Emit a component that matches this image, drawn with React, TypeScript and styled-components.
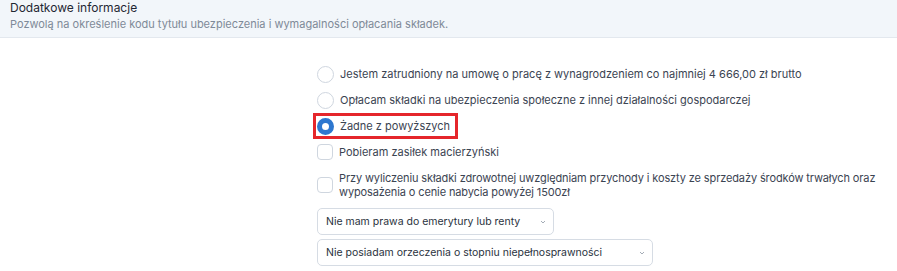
import React from "react";
import styled, { createGlobalStyle } from "styled-components";

const Global = createGlobalStyle`
  html, body { margin: 0; padding: 0; background: #ffffff; }
  body { font-family: Inter, "Noto Sans", sans-serif; color: #3b4452; }
`;

const Page = styled.div`
  width: 897px;
  height: 271px;
  overflow: hidden;
  background: #fff;
`;

const Header = styled.div`
  background: #f2f6fa;
  border-bottom: 1px solid #e3e8ee;
  height: 37px;
  padding: 0 10px;
  display: flex;
  flex-direction: column;
  justify-content: flex-start;
`;

const Title = styled.div`
  font-size: 12px;
  line-height: 15px;
  color: #1f2733;
`;

const Subtitle = styled.div`
  font-size: 11px;
  line-height: 16px;
  color: #7f8a98;
  margin-top: 1px;
`;

const Form = styled.div`
  padding: 23px 0 0 313px;
  display: flex;
  flex-direction: column;
  align-items: flex-start;
`;

const Option = styled.label<{ $highlight?: boolean; $multi?: boolean }>`
  display: flex;
  align-items: center;
  gap: 6px;
  min-height: 26px;
  padding: ${(p) => (p.$multi ? "6px 4px 6px 4px" : "0 8px 0 4px")};
  box-sizing: border-box;
  font-size: 11px;
  line-height: 14px;
  letter-spacing: ${(p) => (p.$multi ? "-0.12px" : "normal")};
  color: #3b4452;
  outline: ${(p) => (p.$highlight ? "3px solid #e5262b" : "none")};
  outline-offset: -3px;
`;

const Radio = styled.span<{ $checked?: boolean }>`
  flex: none;
  width: 17px;
  height: 17px;
  border-radius: 50%;
  box-sizing: border-box;
  border: ${(p) => (p.$checked ? "5px solid #2e77cf" : "1px solid #cfd6df")};
  background: #fff;
`;

const Checkbox = styled.span`
  flex: none;
  width: 16px;
  height: 16px;
  border-radius: 4px;
  box-sizing: border-box;
  border: 1px solid #cfd6df;
  background: #fff;
`;

const Text = styled.span`
  max-width: 560px;
`;

const SelectBox = styled.div<{ $width: number }>`
  width: ${(p) => p.$width}px;
  height: 27px;
  margin-left: 4px;
  box-sizing: border-box;
  border: 1px solid #d6dce4;
  border-radius: 5px;
  display: flex;
  align-items: center;
  justify-content: space-between;
  padding: 0 6px 0 8px;
  font-size: 10.5px;
  color: #2a323d;
`;

const Selects = styled.div`
  display: flex;
  flex-direction: column;
  gap: 4px;
  margin-top: 3px;
`;

const Chevron = () => (
  <svg width="8" height="8" viewBox="0 0 8 8">
    <path d="M2 3 L4 5 L6 3" fill="none" stroke="#9aa3ae" strokeWidth="0.9" />
  </svg>
);

export default function App() {
  return (
    <Page>
      <Global />
      <Header>
        <Title>Dodatkowe informacje</Title>
        <Subtitle>
          Pozwolą na określenie kodu tytułu ubezpieczenia i wymagalności opłacania składek.
        </Subtitle>
      </Header>
      <Form>
        <Option>
          <Radio />
          <Text>Jestem zatrudniony na umowę o pracę z wynagrodzeniem co najmniej 4 666,00 zł brutto</Text>
        </Option>
        <Option>
          <Radio />
          <Text>Opłacam składki na ubezpieczenia społeczne z innej działalności gospodarczej</Text>
        </Option>
        <Option $highlight>
          <Radio $checked />
          <Text>Żadne z powyższych</Text>
        </Option>
        <Option>
          <Checkbox />
          <Text>Pobieram zasiłek macierzyński</Text>
        </Option>
        <Option $multi>
          <Checkbox />
          <Text>
            Przy wyliczeniu składki zdrowotnej uwzględniam przychody i koszty ze sprzedaży środków trwałych oraz
            wyposażenia o cenie nabycia powyżej 1500zł
          </Text>
        </Option>
        <Selects>
          <SelectBox $width={237}>
            <span>Nie mam prawa do emerytury lub renty</span>
            <Chevron />
          </SelectBox>
          <SelectBox $width={336}>
            <span>Nie posiadam orzeczenia o stopniu niepełnosprawności</span>
            <Chevron />
          </SelectBox>
        </Selects>
      </Form>
    </Page>
  );
}
